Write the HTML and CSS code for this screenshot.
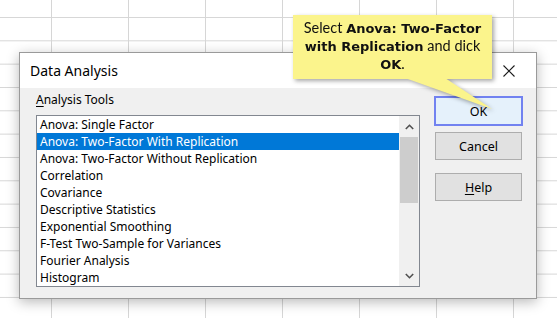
FILE: index.html
```html
<!DOCTYPE html>
<html lang="en">
<head>
    <meta charset="UTF-8">
    <title>Data Analysis</title>
    <link rel="stylesheet" href="styles.css">
</head>
<body>

    <div class="sheet">

        <!-- Dialog window -->
        <div class="dialog">
            <div class="titlebar">
                <span class="title">Data Analysis</span>
                <svg class="close" width="12" height="12" viewBox="0 0 12 12">
                    <path d="M0.5 0.5 L11.5 11.5 M11.5 0.5 L0.5 11.5" stroke="#1a1a1a" stroke-width="1.1" fill="none"/>
                </svg>
            </div>

            <div class="dialog-body">
                <div class="tools">
                    <div class="group-label"><u>A</u>nalysis Tools</div>
                    <div class="listbox">
                        <ul class="items">
                            <li>Anova: Single Factor</li>
                            <li class="selected">Anova: Two-Factor With Replication</li>
                            <li>Anova: Two-Factor Without Replication</li>
                            <li>Correlation</li>
                            <li>Covariance</li>
                            <li>Descriptive Statistics</li>
                            <li>Exponential Smoothing</li>
                            <li>F-Test Two-Sample for Variances</li>
                            <li>Fourier Analysis</li>
                            <li>Histogram</li>
                        </ul>
                        <div class="scrollbar">
                            <div class="arrow">
                                <svg width="9" height="6" viewBox="0 0 9 6">
                                    <path d="M0.8 5 L4.5 1.3 L8.2 5" stroke="#505050" stroke-width="1.6" fill="none"/>
                                </svg>
                            </div>
                            <div class="thumb"></div>
                            <div class="track"></div>
                            <div class="arrow">
                                <svg width="9" height="6" viewBox="0 0 9 6">
                                    <path d="M0.8 1 L4.5 4.7 L8.2 1" stroke="#505050" stroke-width="1.6" fill="none"/>
                                </svg>
                            </div>
                        </div>
                    </div>
                </div>

                <div class="actions">
                    <button type="button" class="btn btn-default">OK</button>
                    <button type="button" class="btn">Cancel</button>
                    <button type="button" class="btn btn-help"><u>H</u>elp</button>
                </div>
            </div>
        </div>

        <!-- Callout note -->
        <div class="callout">
            <p class="callout-text">
                <span class="line">Select <b>Anova: Two-Factor</b></span>
                <span class="line"><b>with Replication</b> and dick</span>
                <span class="line"><b>OK</b>.</span>
            </p>
            <svg class="callout-tail" width="200" height="32" viewBox="0 0 200 32">
                <polygon points="112,0 152,0 199,31" fill="#fbf48c"/>
            </svg>
        </div>

    </div>

</body>
</html>
```

FILE: styles.css
```css
body {
    margin: 0;
    font-family: 'Noto Sans', 'Open Sans', sans-serif;
}

/* spreadsheet grid behind the dialog */
.sheet {
    position: relative;
    width: 557px;
    height: 318px;
    overflow: hidden;
    background-color: #fff;
    background-image:
        linear-gradient(to right, #d6d6d6 1px, transparent 1px),
        linear-gradient(to bottom, #d6d6d6 1px, transparent 1px);
    background-size: 77px 100%, 100% 23.33px;
    background-position: 51px 0, 0 17px;
    padding-top: 52px;
    box-sizing: border-box;
}

.dialog {
    margin-left: 19px;
    width: 518px;
    height: 247px;
    box-sizing: border-box;
    border: 1px solid #9a9a9a;
    background: #f0f0f0;
    box-shadow: 0 3px 12px rgba(0, 0, 0, 0.28);
    display: flex;
    flex-direction: column;
}

.titlebar {
    height: 35px;
    background: #fff;
    display: flex;
    align-items: center;
    justify-content: space-between;
    padding: 0 21px 0 10px;
}

.title {
    font-size: 14px;
    color: #000;
}

.close {
    display: block;
}

.dialog-body {
    flex: 1;
    display: flex;
    padding: 0 14px 0 16px;
}

.tools {
    display: flex;
    flex-direction: column;
}

.group-label {
    font-size: 12px;
    line-height: 16px;
    margin-top: 4px;
    margin-bottom: 7px;
    color: #000;
}

.group-label u {
    text-decoration-thickness: 1px;
    text-underline-offset: 2px;
}

.listbox {
    width: 384px;
    height: 172px;
    box-sizing: border-box;
    border: 1px solid #828790;
    background: #fff;
    display: flex;
}

.items {
    list-style: none;
    margin: 0;
    padding: 0;
    flex: 1;
}

.items li {
    height: 17px;
    line-height: 17px;
    padding-left: 3px;
    font-size: 12px;
    color: #000;
    white-space: nowrap;
}

.items li.selected {
    background: #0078d7;
    color: #fff;
}

.scrollbar {
    width: 20px;
    background: #f0f0f0;
    display: flex;
    flex-direction: column;
}

.arrow {
    height: 21px;
    display: flex;
    align-items: center;
    justify-content: center;
}

.thumb {
    height: 66px;
    margin: 0 1px;
    background: #cdcdcd;
}

.track {
    flex: 1;
}

.actions {
    display: flex;
    flex-direction: column;
    margin-left: 15px;
    padding-top: 8px;
}

.btn {
    width: 87px;
    height: 28px;
    box-sizing: border-box;
    border: 1px solid #adadad;
    background: #e1e1e1;
    font-family: inherit;
    font-size: 12.5px;
    color: #000;
    padding: 0;
    margin-bottom: 6px;
}

.btn-default {
    width: 89px;
    height: 30px;
    margin-left: -1px;
    border: 2px solid #7282f0;
    background: #e5f1fb;
}

.btn-help {
    margin-top: 7px;
}

.btn-help u {
    text-decoration-thickness: 1px;
    text-underline-offset: 2px;
}

/* yellow note pointing at the OK button */
.callout {
    position: absolute;
    left: 293px;
    top: 15px;
    width: 199px;
    height: 64px;
    filter: drop-shadow(2px 2px 2px rgba(0, 0, 0, 0.35));
}

.callout-text {
    margin: 0;
    height: 100%;
    box-sizing: border-box;
    padding: 4px 4px;
    background: #fbf48c;
    font-family: 'Lato', sans-serif;
    font-size: 14.5px;
    text-align: center;
    color: #111;
    display: flex;
    flex-direction: column;
    align-items: center;
}

.callout-text .line {
    height: 18px;
    line-height: 18px;
    white-space: nowrap;
}

.callout-text b {
    font-family: 'DejaVu Sans', sans-serif;
    font-size: 13px;
}

.callout-tail {
    position: absolute;
    left: 0;
    top: 63px;
}
```
